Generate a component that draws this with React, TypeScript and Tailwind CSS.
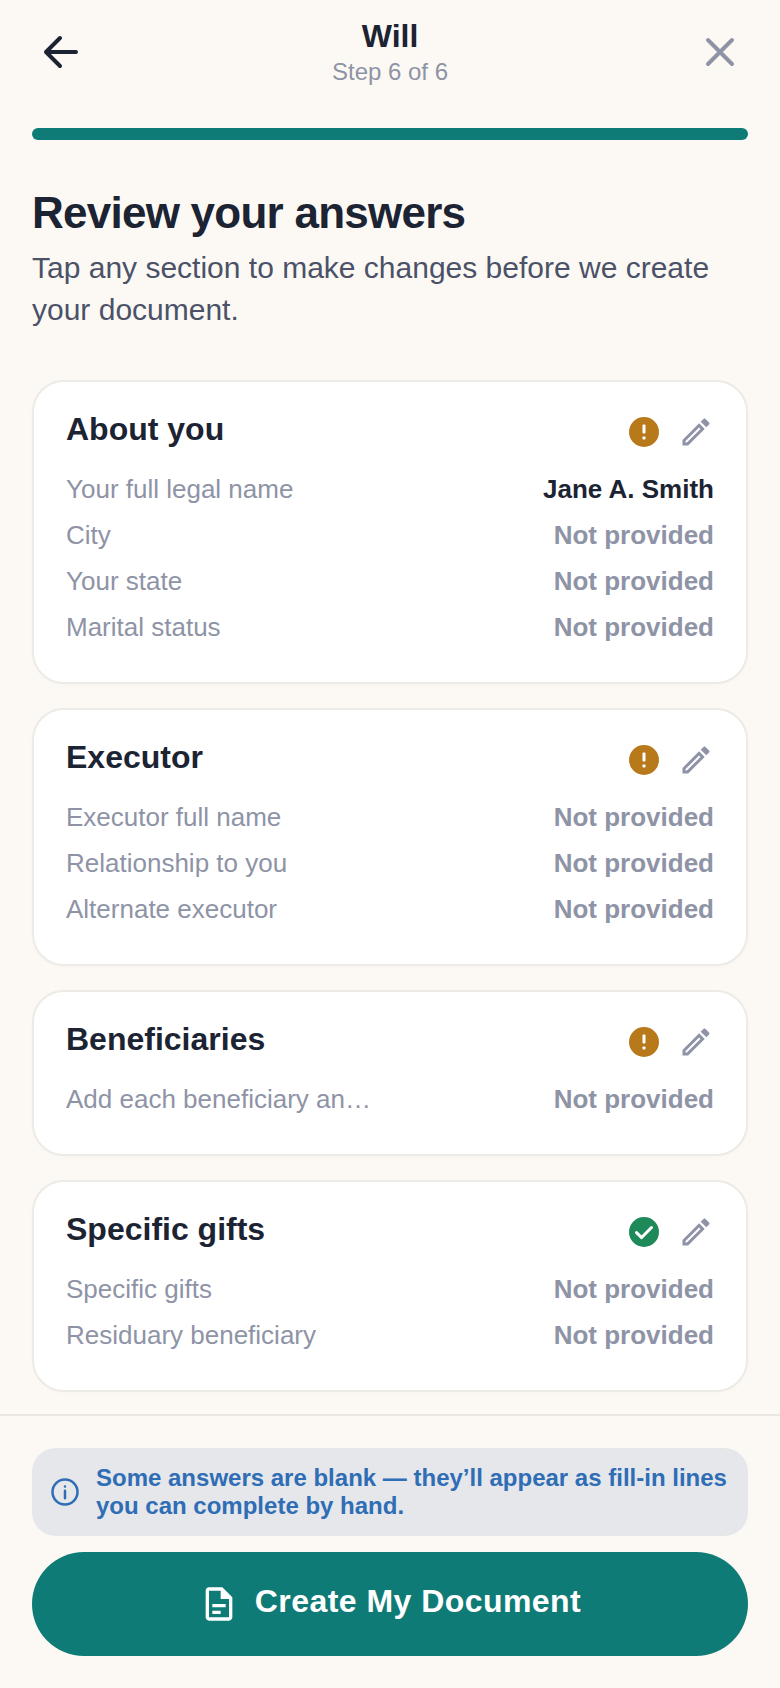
import React from "react";

const EDIT = "M3 17.25V21h3.75L17.81 9.94l-3.75-3.75L3 17.25zM5.92 19H5v-.92l9.06-9.06.92.92L5.92 19zM20.71 5.63l-2.34-2.34c-.2-.2-.45-.29-.71-.29s-.51.1-.7.29l-1.83 1.83 3.75 3.75 1.83-1.83c.39-.39.39-1.02 0-1.41z";

function Status({ ok }: { ok?: boolean }) {
  return ok ? (
    <svg width="36" height="36" viewBox="0 0 24 24" className="shrink-0">
      <circle cx="12" cy="12" r="10" fill="#1e8a5a" />
      <path d="M7 12.4l3.4 3.3L17 9" fill="none" stroke="#fff" strokeWidth="2" strokeLinecap="round" strokeLinejoin="round" />
    </svg>
  ) : (
    <svg width="36" height="36" viewBox="0 0 24 24" className="shrink-0">
      <circle cx="12" cy="12" r="10" fill="#b7791a" />
      <rect x="11" y="7" width="2" height="6" rx="0.6" fill="#fff" />
      <rect x="11" y="15" width="2" height="2" rx="0.5" fill="#fff" />
    </svg>
  );
}

function Row({ label, value }: { label: string; value?: string }) {
  return (
    <div className="flex items-center justify-between h-[46px] text-[26px]">
      <span className="text-[#8e93a6]">{label}</span>
      {value ? (
        <span className="font-bold text-[#1c2333]">{value}</span>
      ) : (
        <span className="font-bold text-[#8e93a6]">Not provided</span>
      )}
    </div>
  );
}

function Card({ title, ok, rows }: { title: string; ok?: boolean; rows: { label: string; value?: string }[] }) {
  return (
    <section className="rounded-[32px] border-2 border-[#edebe6] bg-white px-[32px] pt-[28px] pb-[32px] shadow-[0_1px_4px_rgba(0,0,0,0.02)]">
      <div className="flex items-start justify-between h-[56px]">
        <h2 className="mt-[1px] text-[32px] leading-[36px] font-bold text-[#1c2333]">{title}</h2>
        <div className="flex items-center gap-[16px] mt-[4px]">
          <Status ok={ok} />
          <svg width="36" height="36" viewBox="0 0 24 24" fill="#8e93a6" className="shrink-0">
            <path d={EDIT} />
          </svg>
        </div>
      </div>
      {rows.map((r) => (
        <Row key={r.label} label={r.label} value={r.value} />
      ))}
    </section>
  );
}

export default function App() {
  return (
    <div className="h-[1688px] w-[780px] overflow-hidden flex flex-col bg-[#fcf9f4] font-['Liberation_Sans',Arial,sans-serif]">
      <header className="grid grid-cols-[1fr_auto_1fr] items-center h-[104px] px-[32px]">
        <svg width="48" height="48" viewBox="0 0 24 24" fill="none" stroke="#1c2333" strokeWidth="2" strokeLinecap="round" strokeLinejoin="round" className="ml-[4px]">
          <path d="M20 12H5M12 5l-7 7 7 7" />
        </svg>
        <div className="flex flex-col items-center">
          <div className="text-[32px] leading-[38px] font-bold text-[#1c2333]">Will</div>
          <div className="mt-[1px] text-[24px] leading-[32px] text-[#8e93a6]">Step 6 of 6</div>
        </div>
        <svg width="48" height="48" viewBox="0 0 24 24" fill="none" stroke="#8e93a6" strokeWidth="2" strokeLinecap="round" className="justify-self-end mr-[4px]">
          <path d="M6 6l12 12M18 6L6 18" />
        </svg>
      </header>

      <div className="mx-[32px] mt-[24px] h-[12px] rounded-full bg-[#0f7b77]" />

      <main className="px-[32px] pt-[46px]">
        <h1 className="text-[44px] leading-[54px] font-bold tracking-[-0.75px] text-[#1c2333]">Review your answers</h1>
        <p className="mt-[7px] text-[30px] leading-[42px] text-[#4b5268]">
          Tap any section to make changes before we create your document.
        </p>
        <div className="mt-[49px] flex flex-col gap-[24px]">
          <Card
            title="About you"
            rows={[
              { label: "Your full legal name", value: "Jane A. Smith" },
              { label: "City" },
              { label: "Your state" },
              { label: "Marital status" },
            ]}
          />
          <Card
            title="Executor"
            rows={[{ label: "Executor full name" }, { label: "Relationship to you" }, { label: "Alternate executor" }]}
          />
          <Card title="Beneficiaries" rows={[{ label: "Add each beneficiary an…" }]} />
          <Card title="Specific gifts" ok rows={[{ label: "Specific gifts" }, { label: "Residuary beneficiary" }]} />
        </div>
      </main>

      <footer className="mt-[22px] border-t-2 border-[#e9e7e2] px-[32px] pt-[32px]">
        <div className="flex items-center gap-[16px] rounded-[24px] bg-[#e5e7eb] pl-[18px] pr-[16px] h-[88px]">
          <svg width="30" height="30" viewBox="0 0 24 24" fill="none" stroke="#2f6db5" strokeWidth="2" strokeLinecap="round" className="shrink-0">
            <circle cx="12" cy="12" r="10" />
            <path d="M12 11v6M12 7.5v.01" />
          </svg>
          <p className="text-[24px] leading-[28px] font-bold text-[#2f6db5]">
            Some answers are blank — they’ll appear as fill-in lines you can complete by hand.
          </p>
        </div>
        <button className="mt-[16px] flex h-[104px] w-full items-center justify-center gap-[16px] rounded-full bg-[#0f7b77] text-white">
          <svg width="40" height="40" viewBox="0 0 24 24" fill="#fff">
            <path d="M14 2H6c-1.1 0-1.99.9-1.99 2L4 20c0 1.1.89 2 1.99 2H18c1.1 0 2-.9 2-2V8l-6-6zm4 18H6V4h7v5h5v11z" />
            <path d="M8 12h8v2H8zM8 16h5v2H8z" />
          </svg>
          <span className="text-[32px] font-bold tracking-[0.45px] mt-[-6px]">Create My Document</span>
        </button>
      </footer>
    </div>
  );
}
